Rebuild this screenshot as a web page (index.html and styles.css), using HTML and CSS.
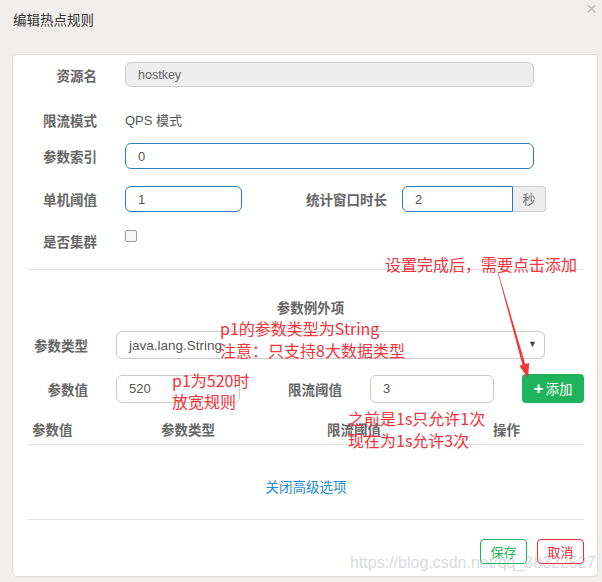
FILE: index.html
```html
<!DOCTYPE html>
<html lang="zh">
<head>
  <meta charset="UTF-8">
  <title>编辑热点规则</title>
  <link rel="stylesheet" href="styles.css">
</head>
<body>
  <div class="modal-header">
    <h4>编辑热点规则</h4>
    <span class="close">&times;</span>
  </div>

  <div class="card">
    <div class="row first">
      <label class="label">资源名</label>
      <div class="input disabled wide">hostkey</div>
    </div>
    <div class="row mode">
      <label class="label">限流模式</label>
      <span class="plain">QPS 模式</span>
    </div>
    <div class="row index">
      <label class="label">参数索引</label>
      <div class="input focus wide">0</div>
    </div>
    <div class="row threshold">
      <label class="label">单机阈值</label>
      <div class="input focus small">1</div>
      <label class="label-inline">统计窗口时长</label>
      <div class="input focus window">2</div>
      <span class="addon">秒</span>
    </div>
    <div class="row cluster">
      <label class="label">是否集群</label>
      <span class="checkbox"></span>
    </div>

    <div class="divider"></div>

    <div class="section-title">参数例外项</div>
    <div class="row type">
      <label class="label2">参数类型</label>
      <div class="input select">java.lang.String<span class="caret">&#9660;</span></div>
    </div>
    <div class="row value">
      <label class="label2">参数值</label>
      <div class="input val">520</div>
      <label class="label-inline limit">限流阈值</label>
      <div class="input val">3</div>
      <button class="btn-add"><span class="plus">+</span>添加</button>
    </div>

    <div class="table-head">
      <span>参数值</span>
      <span>参数类型</span>
      <span>限流阈值</span>
      <span>操作</span>
    </div>

    <div class="toggle"><a href="#">关闭高级选项</a></div>

    <div class="footer">
      <button class="btn-save">保存</button>
      <button class="btn-cancel">取消</button>
    </div>
  </div>

  <!-- annotations drawn over the dialog -->
  <div class="note n1">设置完成后，需要点击添加</div>
  <div class="note n2">p1的参数类型为String<br>注意：只支持8大数据类型</div>
  <div class="note n3">p1为520时<br>放宽规则</div>
  <div class="note n4">之前是1s只允许1次<br>现在为1s允许3次</div>
  <svg class="arrow" width="602" height="582" viewBox="0 0 602 582">
    <polygon points="497.8,273 498.4,273 525.6,365.2 522.7,366" fill="#f03a3a"/>
    <polygon points="528,378 529.2,362.9 519.3,365.8" fill="#f03a3a"/>
  </svg>
  <div class="watermark">https://blog.csdn.net/qq_38322527</div>
</body>
</html>
```

FILE: styles.css
```css
body {
  margin: 0;
  position: relative;
  width: 602px;
  height: 582px;
  overflow: hidden;
  background-color: #f0efed;
  font-family: "Noto Sans CJK SC", "Liberation Sans", sans-serif;
  color: #555;
}

.modal-header {
  height: 54px;
  position: relative;
}

.modal-header h4 {
  margin: 0;
  padding: 9px 0 0 13px;
  font-size: 13.5px;
  line-height: 20px;
  font-weight: normal;
  color: #333;
}

.close {
  position: absolute;
  right: 5px;
  top: 0;
  font-family: "Liberation Sans", sans-serif;
  font-size: 19px;
  line-height: 17px;
  color: #bbb;
}

.card {
  margin-left: 12px;
  width: 586px;
  height: 523px;
  box-sizing: border-box;
  background-color: #fff;
  border: 1px solid #dcdcdc;
  border-radius: 4px;
  padding: 7px 13px 0 15px;
}

.row {
  display: flex;
  align-items: center;
  font-size: 13.5px;
  white-space: nowrap;
}

.row > * {
  flex-shrink: 0;
}

.label {
  width: 69px;
  margin-right: 28px;
  text-align: right;
  font-weight: bold;
  color: #666;
}

.label2 {
  width: 60px;
  margin-right: 28px;
  text-align: right;
  font-weight: bold;
  color: #666;
}

.label-inline {
  font-weight: bold;
  color: #666;
  margin: 0 15px 0 64px;
}

.input {
  box-sizing: border-box;
  border: 1px solid #ccc;
  border-radius: 6px;
  padding: 0 12px;
  font-family: "Liberation Sans", "Noto Sans CJK SC", sans-serif;
  font-size: 13px;
  color: #555;
  display: flex;
  align-items: center;
}

.input.focus {
  border-color: #2a7cbf;
}

.disabled {
  background-color: #eee;
  color: #666;
  font-size: 12.5px;
}

.wide {
  width: 409px;
}

.first .input { height: 25px; }

.mode {
  margin-top: 20px;
  height: 25px;
}

.plain {
  font-family: "Liberation Sans", "Noto Sans CJK SC", sans-serif;
  font-size: 13px;
}

.index {
  margin-top: 11px;
}

.index .input { height: 26px; }

.threshold {
  margin-top: 17px;
}

.small {
  width: 117px;
  height: 26px;
}

.window {
  width: 111px;
  height: 26px;
  border-radius: 6px 0 0 6px;
}

.addon {
  box-sizing: border-box;
  width: 33px;
  height: 26px;
  line-height: 24px;
  text-align: center;
  background-color: #eee;
  border: 1px solid #ccc;
  border-left: none;
  border-radius: 0 4px 4px 0;
  color: #777;
  font-size: 13px;
}

.cluster {
  margin-top: 17px;
  height: 24px;
  align-items: flex-start;
}

.cluster .label {
  line-height: 24px;
}

.checkbox {
  margin-top: 1px;
  width: 10px;
  height: 10px;
  border: 1px solid #999;
  border-radius: 2px;
  background-color: #f6f6f6;
}

.divider {
  margin-top: 16px;
  border-top: 1px solid #e5e5e5;
}

.section-title {
  margin-top: 27px;
  text-align: center;
  padding-left: 9px;
  font-size: 13.5px;
  line-height: 20px;
  font-weight: bold;
  color: #666;
}

.type {
  margin-top: 14px;
}

.select {
  width: 429px;
  height: 28px;
  position: relative;
  font-size: 13.5px;
}

.caret {
  position: absolute;
  right: 7px;
  top: 7px;
  font-size: 9px;
  color: #444;
}

.value {
  margin-top: 15px;
}

.val {
  width: 124px;
  height: 28px;
}

.limit {
  margin: 0 28px 0 48px;
}

.btn-add {
  margin-left: 28px;
  width: 62px;
  height: 29px;
  border: none;
  border-radius: 4px;
  background-color: #21b35c;
  color: #fff;
  font-family: "Noto Sans CJK SC", sans-serif;
  font-size: 13.5px;
  padding: 0;
}

.plus {
  font-family: "Liberation Sans", sans-serif;
  font-weight: bold;
  font-size: 17px;
  margin-right: 2px;
}

.table-head {
  margin-top: 12px;
  display: grid;
  grid-template-columns: 129px 166px 166px auto;
  padding-left: 4px;
  height: 29px;
  line-height: 28px;
  border-bottom: 1px solid #ddd;
  font-size: 13.5px;
  font-weight: bold;
  color: #666;
}

.toggle {
  padding: 30px 0 23px;
  text-align: center;
  line-height: 20px;
  border-bottom: 1px solid #e5e5e5;
}

.toggle a {
  color: #1d8acb;
  text-decoration: none;
  font-size: 13.5px;
}

.footer {
  margin-top: 19px;
  display: flex;
  justify-content: flex-end;
  gap: 10px;
}

.footer button {
  width: 47px;
  height: 25px;
  background-color: #fff;
  border-radius: 4px;
  font-family: "Noto Sans CJK SC", sans-serif;
  font-size: 13px;
  padding: 0;
}

.btn-save {
  border: 1px solid #21b35c;
  color: #21b35c;
}

.btn-cancel {
  border: 1px solid #f0283c;
  color: #f0283c;
}

.note {
  position: absolute;
  color: #f5323c;
  font-size: 16px;
  line-height: 22px;
  white-space: nowrap;
}

.n1 { left: 385px; top: 253px; }
.n2 { left: 220px; top: 317px; }
.n3 { left: 172px; top: 370px; line-height: 21px; }
.n4 { left: 348px; top: 407px; }

.arrow {
  position: absolute;
  left: 0;
  top: 0;
  pointer-events: none;
}

.watermark {
  position: absolute;
  left: 350px;
  top: 554px;
  font-family: "Liberation Sans", sans-serif;
  font-size: 16px;
  color: rgba(170, 170, 170, 0.45);
  white-space: nowrap;
}
```
